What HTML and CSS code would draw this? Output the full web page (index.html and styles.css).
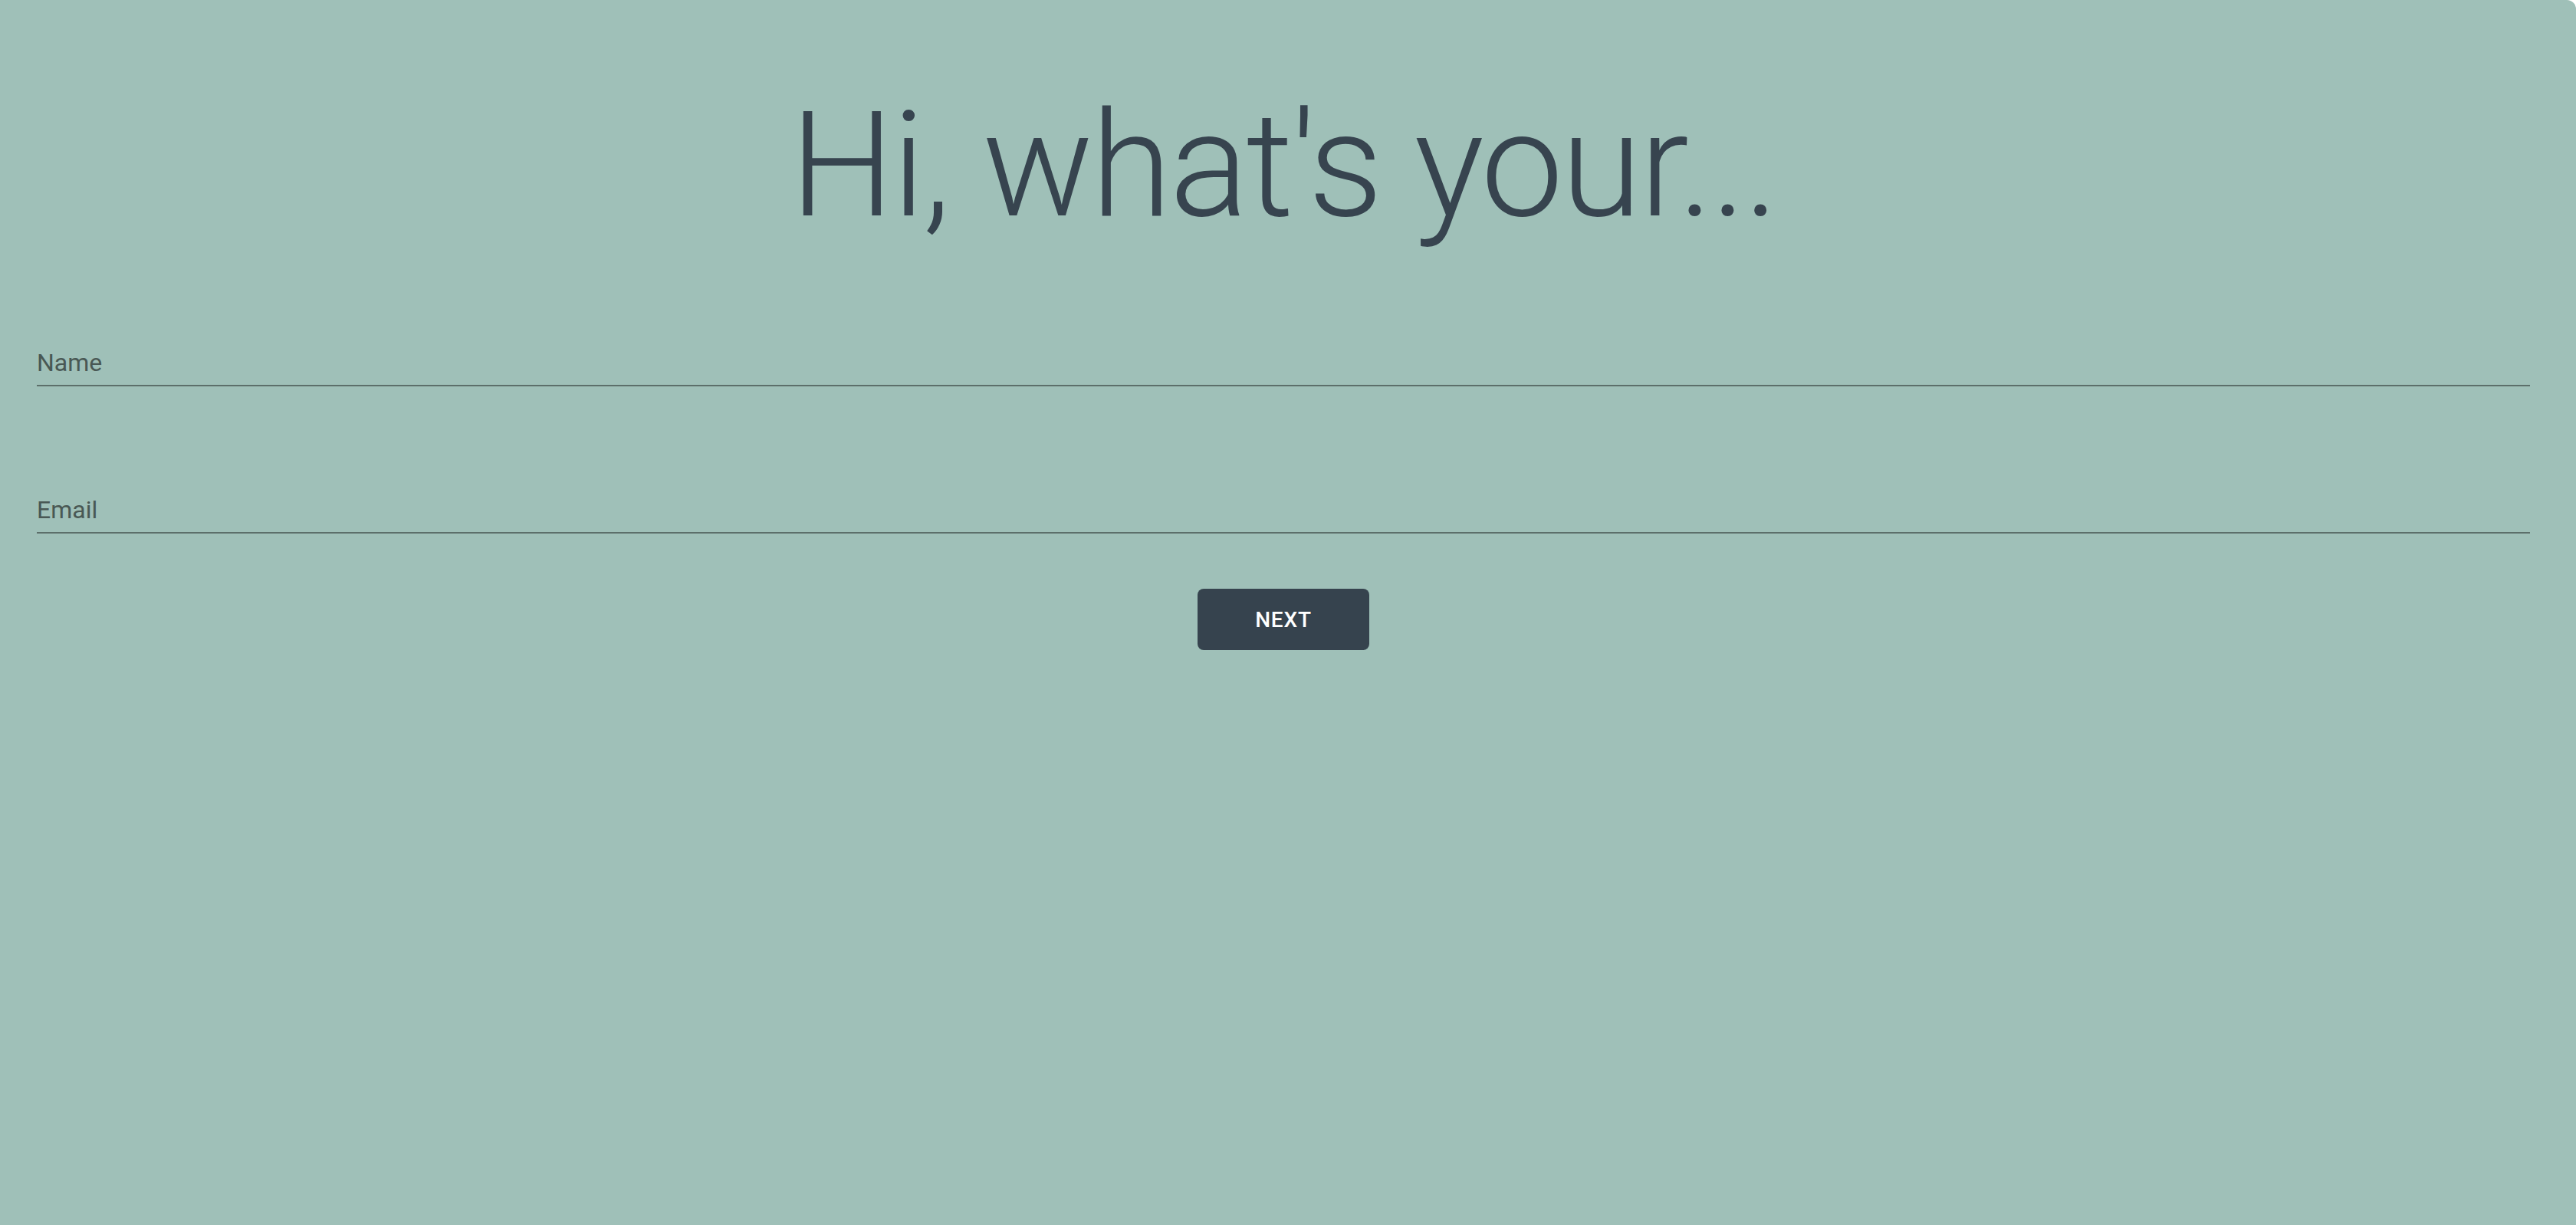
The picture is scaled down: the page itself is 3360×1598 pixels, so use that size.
FILE: index.html
```html
<!DOCTYPE html>
<html lang="en">
<head>
<meta charset="utf-8">
<title>Hi, what's your...</title>
<link rel="stylesheet" href="styles.css">
</head>
<body>
<main class="page">
  <h1 class="title">Hi, what's your...</h1>
  <form class="form">
    <div class="field field-name">
      <label class="label">Name</label>
    </div>
    <div class="field field-email">
      <label class="label">Email</label>
    </div>
    <div class="actions">
      <button type="button" class="btn">NEXT</button>
    </div>
  </form>
</main>
</body>
</html>
```

FILE: styles.css
```css
html, body {
  margin: 0;
  padding: 0;
  background: #ffffff;
}

.page {
  box-sizing: border-box;
  min-height: 100vh;
  padding: 104px 60px 0 48px;
  background: #9fc0b8;
  border-top-right-radius: 12px;
  font-family: Roboto, "Liberation Sans", sans-serif;
}

.title {
  margin: 0;
  text-align: center;
  font-family: Roboto, "Liberation Sans", sans-serif;
  font-weight: 300;
  font-size: 192px;
  line-height: 224px;
  letter-spacing: -3px;
  color: #37444f;
}

.form {
  display: flex;
  flex-direction: column;
  margin-top: 126px;
}

.field {
  padding-bottom: 10px;
  border-bottom: 2px solid #5c6f6a;
}

.field-email {
  margin-top: 142px;
}

.label {
  display: block;
  font-size: 32px;
  line-height: 38px;
  color: #495854;
}

.actions {
  display: flex;
  justify-content: center;
  margin-top: 72px;
}

.btn {
  width: 224px;
  height: 80px;
  border: none;
  border-radius: 8px;
  background: #36434e;
  color: #ffffff;
  font-family: Roboto, "Liberation Sans", sans-serif;
  font-weight: 500;
  font-size: 28px;
  letter-spacing: 0.8px;
  display: flex;
  align-items: center;
  justify-content: center;
  padding: 0;
}
```
